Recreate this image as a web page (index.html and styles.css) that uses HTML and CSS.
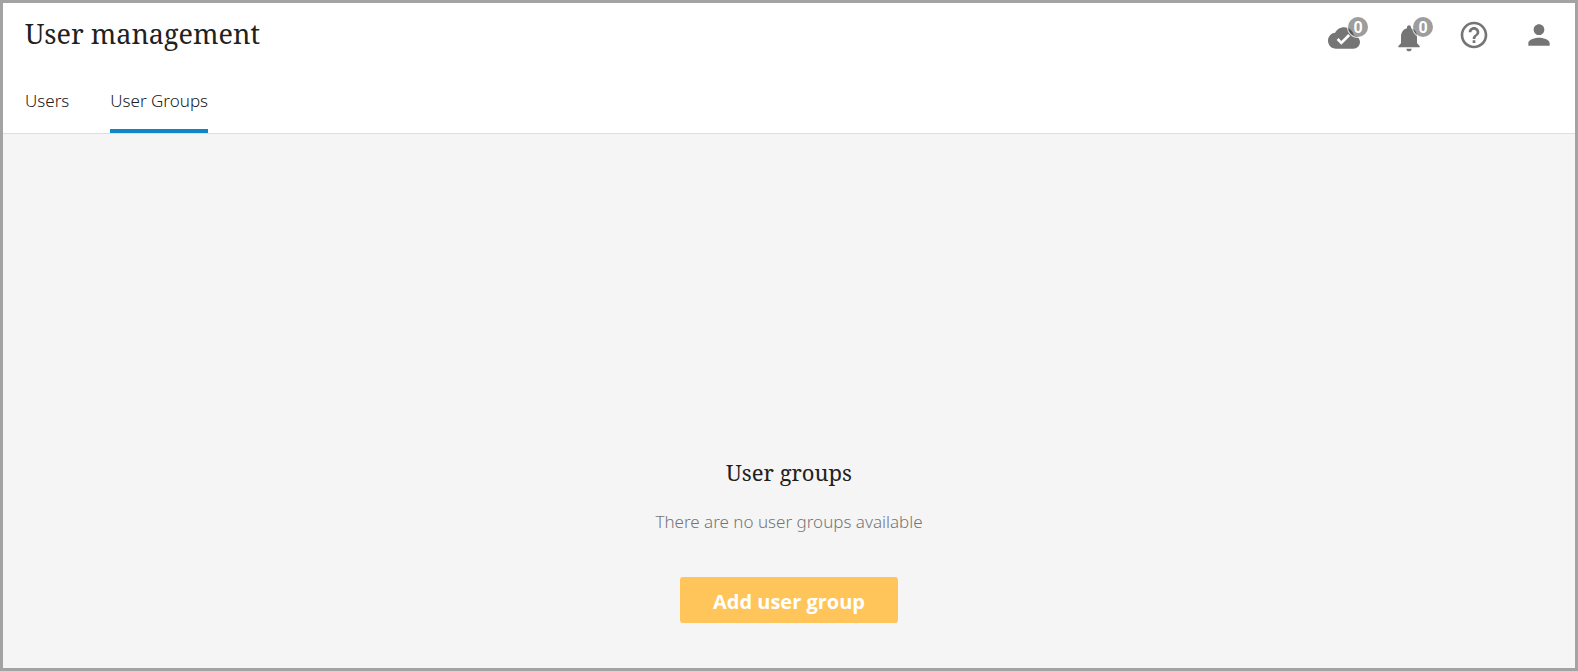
FILE: index.html
```
<!DOCTYPE html>
<html lang="en">
<head>
    <meta charset="UTF-8">
    <meta name="viewport" content="width=device-width, initial-scale=1.0">
    <title>User management</title>
    <link rel="stylesheet" href="styles.css">
</head>
<body>
    <header class="header">
        <div class="header-top">
            <h1 class="title">User management</h1>
            <div class="actions">
                <button class="icon-button with-badge" type="button" aria-label="Jobs">
                    <svg class="icon" viewBox="0 0 24 24"><path d="M19.35 10.04C18.67 6.59 15.64 4 12 4 9.11 4 6.6 5.64 5.35 8.04 2.34 8.36 0 10.91 0 14c0 3.31 2.69 6 6 6h13c2.76 0 5-2.24 5-5 0-2.64-2.05-4.78-4.65-4.96zM10 17l-3.5-3.5 1.41-1.41L10 14.17 15.18 9l1.41 1.41L10 17z"/></svg>
                    <span class="badge">0</span>
                </button>
                <button class="icon-button with-badge" type="button" aria-label="Notifications">
                    <svg class="icon" viewBox="0 0 24 24"><path d="M12 22c1.1 0 2-.9 2-2h-4c0 1.1.89 2 2 2zm6-6v-5c0-3.07-1.64-5.64-4.5-6.32V4c0-.83-.67-1.5-1.5-1.5s-1.5.67-1.5 1.5v.68C7.63 5.36 6 7.92 6 11v5l-2 2v1h16v-1l-2-2z"/></svg>
                    <span class="badge">0</span>
                </button>
                <button class="icon-button" type="button" aria-label="Help">
                    <svg class="icon" viewBox="0 0 24 24"><path d="M11 18h2v-2h-2v2zm1-16C6.48 2 2 6.48 2 12s4.48 10 10 10 10-4.48 10-10S17.52 2 12 2zm0 18c-4.41 0-8-3.59-8-8s3.59-8 8-8 8 3.59 8 8-3.59 8-8 8zm0-14c-2.21 0-4 1.79-4 4h2c0-1.1.9-2 2-2s2 .9 2 2c0 2-3 1.75-3 5h2c0-2.25 3-2.5 3-5 0-2.21-1.79-4-4-4z"/></svg>
                </button>
                <button class="icon-button" type="button" aria-label="Account">
                    <svg class="icon" viewBox="0 0 24 24"><path d="M12 12c2.21 0 4-1.79 4-4s-1.79-4-4-4-4 1.79-4 4 1.79 4 4 4zm0 2c-2.67 0-8 1.34-8 4v2h16v-2c0-2.66-5.33-4-8-4z"/></svg>
                </button>
            </div>
        </div>
        <nav class="tabs">
            <a class="tab" href="#users">Users</a>
            <a class="tab active" href="#user-groups" aria-current="page">User Groups</a>
        </nav>
    </header>

    <main class="content">
        <h2 class="empty-title">User groups</h2>
        <p class="empty-text">There are no user groups available</p>
        <button class="button" type="button">Add user group</button>
    </main>
</body>
</html>
```
FILE: styles.css
```
* {
    box-sizing: border-box;
}

body {
    margin: 0;
    min-height: 100vh;
    display: flex;
    flex-direction: column;
    border: 3px solid #a3a3a3;
    background-color: #f5f5f5;
    color: #212121;
    font-family: "Segoe UI", "Noto Sans", "Open Sans", sans-serif;
    font-size: 17px;
    font-weight: 300;
}

.header {
    background-color: #fff;
    border-bottom: 1px solid #dedede;
}

.header-top {
    display: flex;
    align-items: center;
    justify-content: space-between;
    height: 64px;
    padding: 0 20px 0 22px;
}

.title,
.empty-title {
    margin: 0;
    font-family: "Noto Serif", "Droid Serif", "Liberation Serif", serif;
    font-weight: 400;
}

.title {
    padding-bottom: 2px;
    font-size: 27px;
    line-height: 36px;
}

.actions {
    display: flex;
    gap: 33px;
}

.icon-button {
    position: relative;
    display: block;
    padding: 0;
    border: none;
    background: none;
    cursor: pointer;
}

.icon {
    display: block;
    width: 32px;
    height: 32px;
    fill: #757575;
}

.with-badge {
    padding-top: 3px;
    margin-bottom: -3px;
}

.badge {
    position: absolute;
    top: -2px;
    left: 20px;
    width: 20px;
    height: 20px;
    border-radius: 50%;
    background-color: rgba(60, 60, 60, 0.5);
    box-shadow: 0 0 0 1px rgba(255, 255, 255, 0.8);
    color: #fff;
    font-family: Roboto, sans-serif;
    font-size: 16px;
    font-weight: 700;
    line-height: 21px;
    text-align: center;
}

.tabs {
    display: flex;
    gap: 41px;
    padding: 0 22px;
}

.tab {
    height: 66px;
    padding-top: 22px;
    border-bottom: 4px solid transparent;
    color: #212121;
    line-height: 24px;
    text-decoration: none;
}

.tab.active {
    border-bottom-color: #0f87c5;
}

.content {
    flex: 1;
    display: flex;
    flex-direction: column;
    align-items: center;
    justify-content: flex-end;
    padding: 24px 24px 45px;
}

.empty-title {
    font-size: 22px;
    line-height: 32px;
}

.empty-text {
    margin: 22px 0 43px;
    color: #757575;
    line-height: 24px;
}

.button {
    height: 46px;
    padding: 3px 33px 0;
    border: none;
    border-radius: 3px;
    background-color: #ffc55a;
    color: #fff;
    font-family: "Segoe UI", "Open Sans", sans-serif;
    font-size: 20px;
    font-weight: 700;
    cursor: pointer;
}
```
